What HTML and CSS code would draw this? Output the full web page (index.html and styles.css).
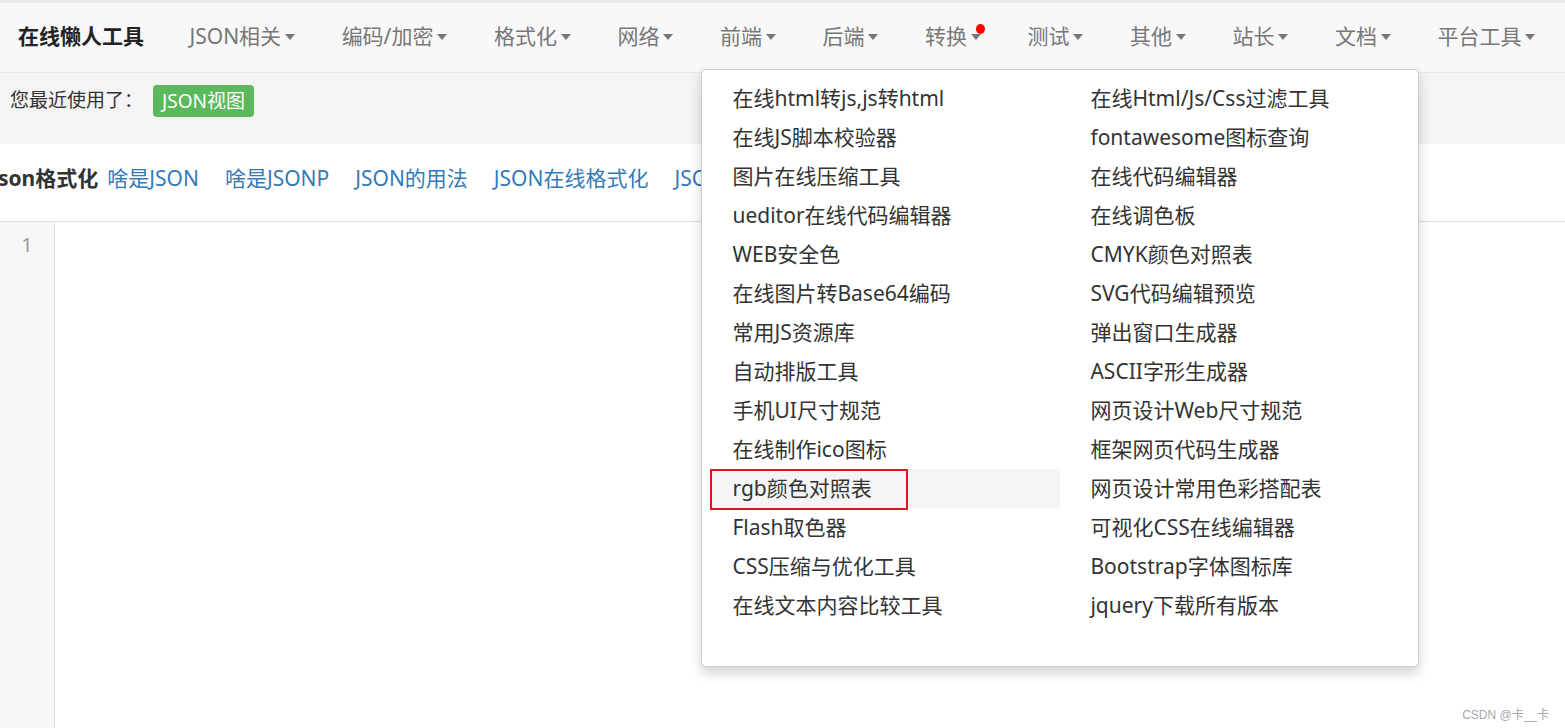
FILE: index.html
```html
<!DOCTYPE html>
<html lang="zh-CN">
<head>
    <meta charset="UTF-8">
    <title>在线懒人工具</title>
    <link rel="stylesheet" href="styles.css">
</head>
<body>
    <nav class="navbar">
        <a class="brand" href="#">在线懒人工具</a>
        <ul class="nav">
            <li><a href="#">JSON相关<span class="caret"></span></a></li>
            <li><a href="#">编码/加密<span class="caret"></span></a></li>
            <li><a href="#">格式化<span class="caret"></span></a></li>
            <li><a href="#">网络<span class="caret"></span></a></li>
            <li class="open">
                <a href="#">前端<span class="caret"></span></a>
                <ul class="dropdown">
                    <li><a href="#">在线html转js,js转html</a></li>
                    <li><a href="#">在线Html/Js/Css过滤工具</a></li>
                    <li><a href="#">在线JS脚本校验器</a></li>
                    <li><a href="#">fontawesome图标查询</a></li>
                    <li><a href="#">图片在线压缩工具</a></li>
                    <li><a href="#">在线代码编辑器</a></li>
                    <li><a href="#">ueditor在线代码编辑器</a></li>
                    <li><a href="#">在线调色板</a></li>
                    <li><a href="#">WEB安全色</a></li>
                    <li><a href="#">CMYK颜色对照表</a></li>
                    <li><a href="#">在线图片转Base64编码</a></li>
                    <li><a href="#">SVG代码编辑预览</a></li>
                    <li><a href="#">常用JS资源库</a></li>
                    <li><a href="#">弹出窗口生成器</a></li>
                    <li><a href="#">自动排版工具</a></li>
                    <li><a href="#">ASCII字形生成器</a></li>
                    <li><a href="#">手机UI尺寸规范</a></li>
                    <li><a href="#">网页设计Web尺寸规范</a></li>
                    <li><a href="#">在线制作ico图标</a></li>
                    <li><a href="#">框架网页代码生成器</a></li>
                    <li class="active"><a href="#">rgb颜色对照表</a><span class="mark"></span></li>
                    <li><a href="#">网页设计常用色彩搭配表</a></li>
                    <li><a href="#">Flash取色器</a></li>
                    <li><a href="#">可视化CSS在线编辑器</a></li>
                    <li><a href="#">CSS压缩与优化工具</a></li>
                    <li><a href="#">Bootstrap字体图标库</a></li>
                    <li><a href="#">在线文本内容比较工具</a></li>
                    <li><a href="#">jquery下载所有版本</a></li>
                </ul>
            </li>
            <li><a href="#">后端<span class="caret"></span></a></li>
            <li><a href="#">转换<span class="caret"></span></a><span class="dot"></span></li>
            <li><a href="#">测试<span class="caret"></span></a></li>
            <li><a href="#">其他<span class="caret"></span></a></li>
            <li><a href="#">站长<span class="caret"></span></a></li>
            <li><a href="#">文档<span class="caret"></span></a></li>
            <li><a href="#">平台工具<span class="caret"></span></a></li>
        </ul>
    </nav>

    <div class="recent">
        <span class="recent-title">您最近使用了：</span>
        <a class="label" href="#">JSON视图</a>
    </div>

    <div class="tool-bar">
        <h2 class="tool-title">Json格式化</h2>
        <a href="#">啥是JSON</a>
        <a href="#">啥是JSONP</a>
        <a href="#">JSON的用法</a>
        <a href="#">JSON在线格式化</a>
        <a href="#">JSON在线解析</a>
    </div>

    <div class="editor">
        <div class="gutter">1</div>
        <div class="code"></div>
    </div>

    <div class="watermark">CSDN @卡__卡</div>
</body>
</html>
```

FILE: styles.css
```css
* {
    margin: 0;
    padding: 0;
    box-sizing: border-box;
}

html, body {
    height: 728px;
    overflow: hidden;
}

body {
    font-family: "Noto Sans", "Noto Sans CJK SC", sans-serif;
    background: #fff;
    color: #333;
    position: relative;
}

a {
    text-decoration: none;
}

ul {
    list-style: none;
}

.navbar {
    display: flex;
    align-items: center;
    height: 73px;
    border-top: 3px solid #e9e9e9;
    border-bottom: 1px solid #e7e7e7;
    background: #f8f8f8;
    padding-bottom: 3px;
}

.brand {
    padding: 0 22px 0 18px;
    font-size: 21px;
    font-weight: bold;
    color: #222;
    line-height: 30px;
}

.nav {
    display: flex;
    align-items: center;
}

.nav > li {
    position: relative;
}

.nav > li > a {
    display: flex;
    align-items: center;
    padding: 0 23px 0 23.5px;
    font-size: 21px;
    line-height: 30px;
    color: #777;
}

.caret {
    display: inline-block;
    width: 0;
    height: 0;
    margin-left: 4px;
    margin-top: 2px;
    border-top: 6px solid #777;
    border-left: 5.5px solid transparent;
    border-right: 5.5px solid transparent;
}

.dot {
    position: absolute;
    right: 19px;
    top: 3px;
    width: 9px;
    height: 10px;
    border-radius: 50%;
    background: #f00;
}

.dropdown {
    position: absolute;
    top: 48px;
    left: 5px;
    z-index: 10;
    width: 718px;
    height: 598px;
    padding: 9px 8px 0 8px;
    display: grid;
    grid-template-columns: 350px 350px;
    column-gap: 8px;
    grid-auto-rows: 39px;
    align-content: start;
    background: #fff;
    border: 1px solid #ccc;
    border-radius: 4px;
    box-shadow: 0 6px 12px rgba(0, 0, 0, 0.175);
}

.dropdown li {
    position: relative;
}

.dropdown a {
    display: block;
    padding: 0 22px;
    font-size: 21px;
    line-height: 39px;
    color: #333;
    white-space: nowrap;
}

.dropdown li.active {
    background: #f5f5f5;
}

.mark {
    position: absolute;
    left: 0;
    top: 0;
    width: 198px;
    height: 41px;
    border: 2px solid #e3141b;
}

.recent {
    display: flex;
    align-items: flex-start;
    height: 71px;
    padding: 12px 10px 0 10px;
    background: #f4f4f4;
}

.recent-title {
    font-size: 19px;
    line-height: 30px;
    color: #333;
}

.label {
    margin-left: 10px;
    padding: 0 9px;
    font-size: 19px;
    line-height: 32px;
    color: #fff;
    background: #5cb85c;
    border-radius: 4px;
}

.tool-bar {
    display: flex;
    align-items: center;
    height: 78px;
    padding-bottom: 12px;
    border-bottom: 1px solid #ddd;
    white-space: nowrap;
    overflow: hidden;
}

.tool-title {
    margin-left: -9px;
    margin-right: 9px;
    font-size: 21px;
    font-weight: bold;
    color: #333;
}

.tool-bar a {
    margin-right: 26px;
    font-size: 21px;
    color: #337ab7;
}

.editor {
    display: flex;
    height: 510px;
}

.gutter {
    width: 55px;
    padding-top: 8px;
    text-align: center;
    font-size: 20px;
    line-height: 30px;
    color: #999;
    background: #f7f7f7;
    border-right: 1px solid #ddd;
}

.code {
    flex: 1;
}

.watermark {
    position: absolute;
    right: 16px;
    bottom: 6px;
    font-family: "Liberation Sans", "Noto Sans CJK SC", sans-serif;
    font-size: 12px;
    color: #a8a8a8;
}
```
